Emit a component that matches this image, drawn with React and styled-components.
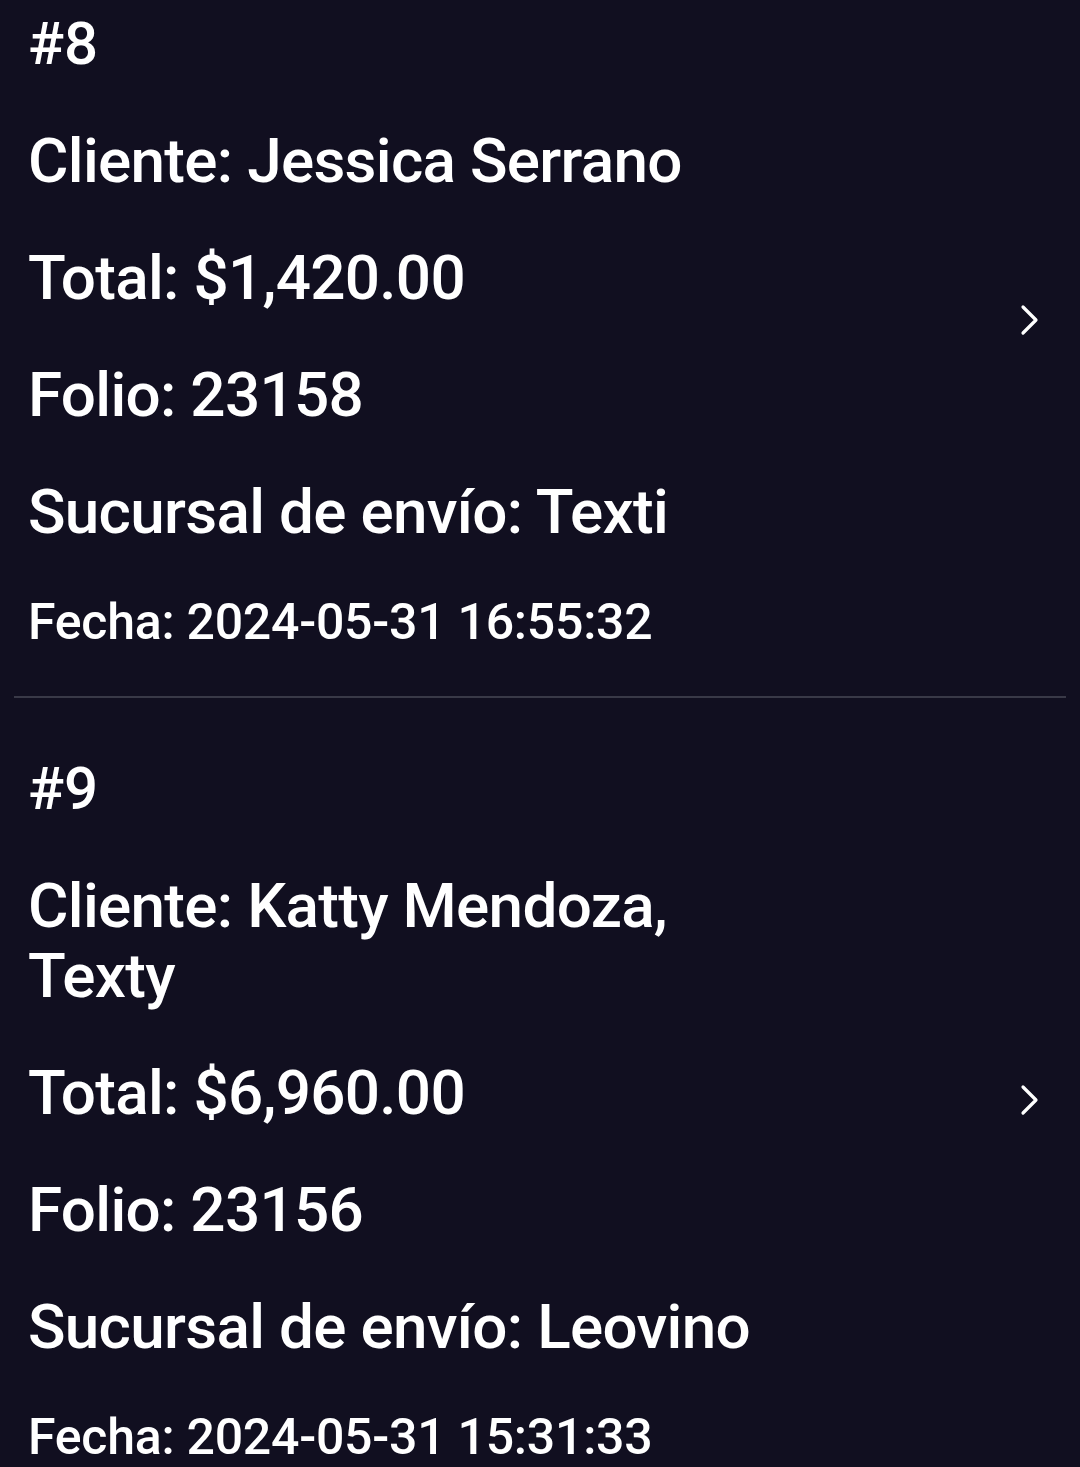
import styled, { createGlobalStyle } from 'styled-components';

const GlobalStyle = createGlobalStyle`
  html, body {
    margin: 0;
    padding: 0;
    background: #110f20;
  }
  body {
    font-family: Roboto, "Noto Sans", "Liberation Sans", sans-serif;
    color: #ffffff;
  }
`;

const Screen = styled.div`
  width: 1080px;
  height: 1467px;
  overflow: hidden;
  background: #110f20;
`;

const List = styled.div`
  margin: -47px 14px 0;
  display: flex;
  flex-direction: column;
`;

const Row = styled.div`
  display: flex;
  align-items: center;
  padding: 56px 26px 46px 14px;
  border-bottom: 2px solid #393947;

  &:last-child {
    border-bottom: none;
  }
`;

const Info = styled.div`
  flex: 1;
  display: flex;
  flex-direction: column;
  gap: 47px;
`;

const Line = styled.p`
  margin: 0;
  font-size: ${({ size }) => size || 62}px;
  line-height: ${({ lh }) => lh || 70}px;
  font-weight: 500;
  letter-spacing: ${({ spacing }) => spacing ?? -0.7}px;
  max-width: 745px;
`;

const Chevron = styled.svg`
  width: 20px;
  height: 32px;
  flex-shrink: 0;
  margin-bottom: 20px;
`;

function ChevronIcon() {
  return (
    <Chevron viewBox="0 0 20 32" fill="none">
      <path d="M3 3 L16 16 L3 29" stroke="#ffffff" strokeWidth="3.2" strokeLinecap="round" strokeLinejoin="round" />
    </Chevron>
  );
}

const pedidos = [
  {
    num: 8,
    cliente: 'Jessica Serrano',
    total: '$1,420.00',
    folio: '23158',
    sucursal: 'Texti',
    fecha: '2024-05-31 16:55:32',
  },
  {
    num: 9,
    cliente: 'Katty Mendoza, Texty',
    total: '$6,960.00',
    folio: '23156',
    sucursal: 'Leovino',
    fecha: '2024-05-31 15:31:33',
  },
];

export default function App() {
  return (
    <Screen>
      <GlobalStyle />
      <List>
        {pedidos.map((p) => (
          <Row key={p.num}>
            <Info>
              <Line size={60} spacing={-0.3}>#{p.num}</Line>
              <Line>Cliente: {p.cliente}</Line>
              <Line>Total: {p.total}</Line>
              <Line>Folio: {p.folio}</Line>
              <Line>Sucursal de envío: {p.sucursal}</Line>
              <Line size={50} lh={56} spacing={-0.25}>Fecha: {p.fecha}</Line>
            </Info>
            <ChevronIcon />
          </Row>
        ))}
      </List>
    </Screen>
  );
}
